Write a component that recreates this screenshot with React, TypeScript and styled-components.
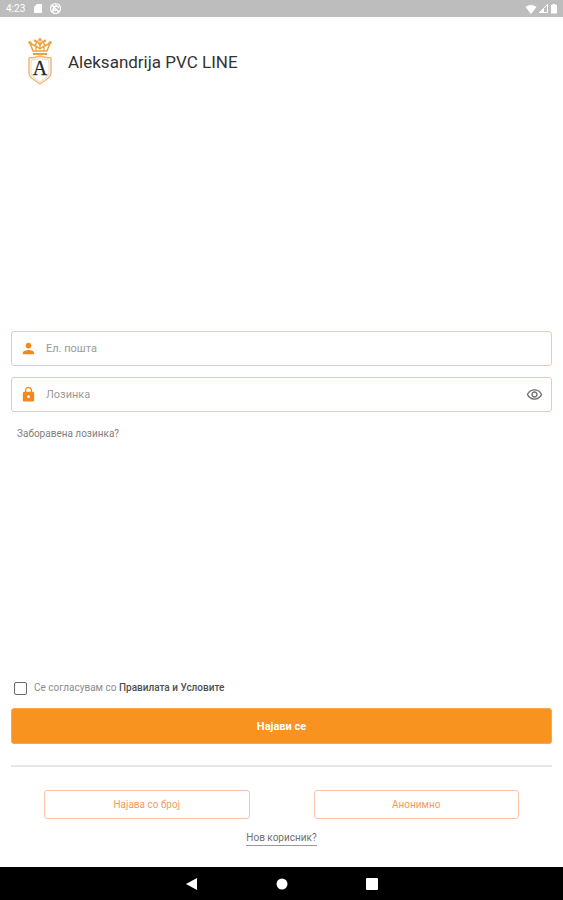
import React, { useState } from "react";
import styled, { createGlobalStyle } from "styled-components";

const ORANGE = "#f7931e";
const OUTLINE = "#fbc3ab";

const GlobalStyle = createGlobalStyle`
  *, *::before, *::after { box-sizing: border-box; }
  body { margin: 0; background: #fff; font-family: Roboto, "Noto Sans", sans-serif; }
  button, input { font-family: inherit; }
`;

const Screen = styled.div`
  min-height: 100vh;
  display: flex;
  flex-direction: column;
  background: #fff;
`;

const StatusBar = styled.header`
  height: 17px;
  padding: 0 5px 0 6px;
  display: flex;
  align-items: center;
  gap: 8px;
  background: #bdbdbd;
  color: #fff;
  font-size: 10px;
  line-height: 16px;
`;

const StatusIcons = styled.div<{ $end?: boolean }>`
  display: flex;
  align-items: center;
  gap: ${(p) => (p.$end ? "1px" : "6px")};
  margin-left: ${(p) => (p.$end ? "auto" : "0")};
`;

const Main = styled.main`
  flex: 1;
  display: flex;
  flex-direction: column;
  justify-content: space-between;
  padding: 21px 11px;
`;

const Brand = styled.div`
  display: flex;
  align-items: center;
  gap: 16px;
  padding-left: 17px;
`;

const BrandName = styled.h1`
  margin: 0;
  font-size: 17px;
  line-height: 24px;
  font-weight: 400;
  color: #333;
`;

const Form = styled.form`
  display: flex;
  flex-direction: column;
  gap: 11px;
  padding-top: 10px;
`;

const Field = styled.label`
  height: 35px;
  display: flex;
  align-items: center;
  gap: 9px;
  padding: 0 8px;
  border: 1px solid ${OUTLINE};
  border-radius: 3px;
  color: #f5881a;
`;

const FieldInput = styled.input`
  flex: 1;
  min-width: 0;
  padding: 0;
  border: 0;
  outline: 0;
  background: transparent;
  color: #444;
  font-size: 11px;
  line-height: 16px;
  &::placeholder { color: #9a9a9a; opacity: 1; }
`;

const IconButton = styled.button`
  display: flex;
  padding: 0;
  border: 0;
  background: none;
  color: #757575;
`;

const ForgotLink = styled.a`
  align-self: flex-start;
  margin-left: 6px;
  padding: 4px 0;
  font-size: 10px;
  line-height: 14px;
  color: #808080;
  text-decoration: none;
`;

const Actions = styled.section`
  display: flex;
  flex-direction: column;
`;

const Terms = styled.label`
  display: flex;
  align-items: center;
  gap: 7px;
  margin: 0 0 13px 3px;
  font-size: 10px;
  line-height: 14px;
  color: #8c8c8c;
`;

const Checkbox = styled.input`
  appearance: none;
  width: 13px;
  height: 13px;
  margin: 0;
  border: 1px solid #6a6a6a;
  border-radius: 2px;
  &:checked { background: ${ORANGE}; }
`;

const TermsLink = styled.a`
  color: #505050;
  font-weight: 500;
  text-decoration: none;
`;

const PrimaryButton = styled.button`
  height: 36px;
  border: 1px solid #f8a555;
  border-radius: 3px;
  background: ${ORANGE};
  color: #fff;
  font-size: 11px;
  font-weight: 700;
`;

const Divider = styled.hr`
  width: 100%;
  height: 2px;
  margin: 21px 0 23px;
  border: 0;
  background: #e6e6e6;
`;

const Alternatives = styled.div`
  display: grid;
  grid-template-columns: 1fr 1fr;
  gap: 64px;
  margin: 0 33px 12px;
`;

const OutlineButton = styled.button`
  height: 29px;
  border: 1px solid ${OUTLINE};
  border-radius: 3px;
  background: #fff;
  color: #f79a5c;
  font-size: 10px;
`;

const NewUserLink = styled.a`
  align-self: center;
  border-bottom: 1px solid #999;
  font-size: 10px;
  line-height: 14px;
  color: #707070;
  text-decoration: none;
`;

const NavBar = styled.nav`
  height: 33px;
  display: flex;
  align-items: center;
  justify-content: center;
  gap: 76px;
  background: #000;
`;

const NavButton = styled.button`
  display: flex;
  padding: 0;
  border: 0;
  background: none;
  color: #fff;
`;

const Logo = () => (
  <svg width="24" height="47" viewBox="0 0 24 47" role="img" aria-label="Aleksandrija">
    <g fill="none" stroke="#eda03b" strokeLinejoin="round">
      <path d="M5 13 2 5l5 3 2-5 3 4 3-4 2 5 5-3-3 8Z" strokeWidth="1.5" />
      <path d="M8 12V8l4 3 4-3v4M12 4v7" strokeWidth="1.3" />
      <path d="M5 16h14" strokeWidth="2" />
      <path
        d="M1 20c4 0 8-1 11-2 3 1 7 2 11 2v15c0 5-6 7-11 11C7 42 1 40 1 35Z"
        stroke="#efb46d"
        strokeWidth="1.4"
      />
      <path d="M3 22c4 0 7-1 9-2 2 1 5 2 9 2v13c0 3-4 5-9 9-5-4-9-6-9-9Z" stroke="#d9d9d4" strokeWidth="1" />
    </g>
    <g fill="#eda03b">
      <circle cx="1.8" cy="4.5" r="1.5" />
      <circle cx="7" cy="2.8" r="1.3" />
      <circle cx="12" cy="1.8" r="1.7" />
      <circle cx="17" cy="2.8" r="1.3" />
      <circle cx="22.2" cy="4.5" r="1.5" />
    </g>
    <text
      x="12"
      y="37"
      textAnchor="middle"
      fontFamily="Liberation Serif, serif"
      fontSize="20"
      fill="#272722"
      stroke="#272722"
      strokeWidth="0.3"
    >
      A
    </text>
  </svg>
);

const MaterialIcon = ({ d, size }: { d: string; size: number }) => (
  <svg width={size} height={size} viewBox="0 0 24 24" fill="currentColor" aria-hidden="true">
    <path d={d} />
  </svg>
);

const PERSON =
  "M12 12c2.21 0 4-1.79 4-4s-1.79-4-4-4-4 1.79-4 4 1.79 4 4 4zm0 2c-2.67 0-8 1.34-8 4v2h16v-2c0-2.66-5.33-4-8-4z";
const LOCK =
  "M18 8h-1V6c0-2.76-2.24-5-5-5S7 3.24 7 6v2H6c-1.1 0-2 .9-2 2v10c0 1.1.9 2 2 2h12c1.1 0 2-.9 2-2V10c0-1.1-.9-2-2-2zm-6 9c-1.1 0-2-.9-2-2s.9-2 2-2 2 .9 2 2-.9 2-2 2zm3.1-9H8.9V6c0-1.71 1.39-3.1 3.1-3.1s3.1 1.39 3.1 3.1v2z";
const EYE =
  "M12 6.5c3.79 0 7.17 2.13 8.82 5.5-1.65 3.37-5.02 5.5-8.82 5.5S4.83 15.37 3.18 12C4.83 8.63 8.21 6.5 12 6.5m0-2C7 4.5 2.73 7.61 1 12c1.73 4.39 6 7.5 11 7.5s9.27-3.11 11-7.5c-1.73-4.39-6-7.5-11-7.5zm0 5a2.5 2.5 0 0 1 0 5 2.5 2.5 0 0 1 0-5m0-2c-2.48 0-4.5 2.02-4.5 4.5s2.02 4.5 4.5 4.5 4.5-2.02 4.5-4.5-2.02-4.5-4.5-4.5z";

export default function App() {
  const [visible, setVisible] = useState(false);

  return (
    <Screen>
      <GlobalStyle />
      <StatusBar>
        <span>4:23</span>
        <StatusIcons>
          <svg width="10" height="11" viewBox="0 0 10 11" aria-hidden="true">
            <path d="M4 1h5v9H1V4Z" fill="#fff" />
          </svg>
          <svg width="13" height="13" viewBox="0 0 13 13" fill="none" stroke="#fff" aria-hidden="true">
            <circle cx="6.5" cy="6.5" r="5" strokeWidth="1.2" />
            <path d="M3 3l7 7M4 10V7l3-4 3 3M4 7l3 2" strokeWidth="1.4" />
          </svg>
        </StatusIcons>
        <StatusIcons $end>
          <svg width="12" height="10" viewBox="0 0 12 10" aria-hidden="true">
            <path d="M6 10 .5 3C3.500 .3 8.500 .3 11.500 3Z" fill="#fff" />
          </svg>
          <svg width="11" height="11" viewBox="0 0 11 11" aria-hidden="true">
            <path d="M1.500 9.500 9.500 1.500v8Z" fill="none" stroke="#fff" />
            <path d="M1 10l5-5v5Z" fill="#fff" />
          </svg>
          <svg width="8" height="11" viewBox="0 0 8 11" aria-hidden="true">
            <path d="M1 2h1.500V1h3v1H7v8.500H1Z" fill="#fff" />
          </svg>
        </StatusIcons>
      </StatusBar>

      <Main>
        <Brand>
          <Logo />
          <BrandName>Aleksandrija PVC LINE</BrandName>
        </Brand>

        <Form id="login" onSubmit={(e) => e.preventDefault()}>
          <Field>
            <MaterialIcon d={PERSON} size={17} />
            <FieldInput type="email" placeholder="Ел. пошта" aria-label="Ел. пошта" />
          </Field>
          <Field>
            <MaterialIcon d={LOCK} size={17} />
            <FieldInput type={visible ? "text" : "password"} placeholder="Лозинка" aria-label="Лозинка" />
            <IconButton type="button" aria-label="Прикажи лозинка" onClick={() => setVisible(!visible)}>
              <MaterialIcon d={EYE} size={17} />
            </IconButton>
          </Field>
          <ForgotLink href="#forgot">Заборавена лозинка?</ForgotLink>
        </Form>

        <Actions>
          <Terms>
            <Checkbox type="checkbox" />
            <span>
              Се согласувам со <TermsLink href="#terms">Правилата и Условите</TermsLink>
            </span>
          </Terms>
          <PrimaryButton type="submit" form="login">Најави се</PrimaryButton>
          <Divider />
          <Alternatives>
            <OutlineButton type="button">Најава со број</OutlineButton>
            <OutlineButton type="button">Анонимно</OutlineButton>
          </Alternatives>
          <NewUserLink href="#register">Нов корисник?</NewUserLink>
        </Actions>
      </Main>

      <NavBar>
        <NavButton type="button" aria-label="Назад">
          <svg width="14" height="14" viewBox="0 0 14 14" aria-hidden="true">
            <path d="M1 7 12 1v12Z" fill="currentColor" />
          </svg>
        </NavButton>
        <NavButton type="button" aria-label="Почетна">
          <svg width="14" height="14" viewBox="0 0 14 14" aria-hidden="true">
            <circle cx="7" cy="7" r="5.5" fill="currentColor" />
          </svg>
        </NavButton>
        <NavButton type="button" aria-label="Преглед">
          <svg width="14" height="14" viewBox="0 0 14 14" aria-hidden="true">
            <rect x="1" y="1" width="12" height="12" rx="1" fill="currentColor" />
          </svg>
        </NavButton>
      </NavBar>
    </Screen>
  );
}
